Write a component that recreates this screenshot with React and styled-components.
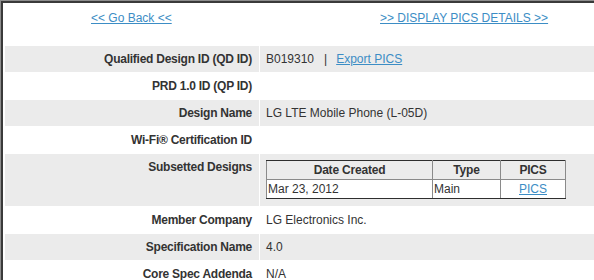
import React from "react";
import styled, { createGlobalStyle } from "styled-components";

const Global = createGlobalStyle`
  html, body { margin: 0; padding: 0; background: #fff; overflow: hidden; }
  body { font-family: "Liberation Sans", Arial, sans-serif; font-size: 12px; color: #333; }
`;

const Frame = styled.div`
  width: 594px;
  height: 280px;
  box-sizing: border-box;
  border-top: 1px solid #8e8e8e;
  border-left: 1px solid #8e8e8e;
  overflow: hidden;
`;

const Inner = styled.div`
  height: 100%;
  box-sizing: border-box;
  border-top: 2px solid #3a3a3a;
  border-left: 2px solid #3a3a3a;
  padding-left: 2px;
  width: 700px;
`;

const LinkBar = styled.div`
  display: flex;
  height: 43px;
  box-sizing: border-box;
  padding: 8px 0 0 86px;
  line-height: 14px;
`;

const LinkSlot = styled.div`
  width: ${(p) => p.$w || "auto"};
`;

const Link = styled.a`
  color: #3c8dc5;
  text-decoration: underline;
  cursor: pointer;
`;

const Rows = styled.div`
  display: flex;
  flex-direction: column;
  gap: 1px;
`;

const Row = styled.div`
  display: grid;
  grid-template-columns: 254px 1fr;
  column-gap: 1px;
  min-height: 26px;
`;

const Label = styled.div`
  background: ${(p) => (p.$shade ? "#ebebeb" : "#fff")};
  text-align: right;
  font-weight: bold;
  letter-spacing: -0.25px;
  padding: 6px 7px 6px 0;
  line-height: 14px;
  color: #333;
`;

const Value = styled.div`
  background: ${(p) => (p.$shade ? "#ebebeb" : "#fff")};
  padding: 6px 0 6px 6px;
  line-height: 14px;
  color: #333;
`;

const Sep = styled.span`
  margin: 0 9px 0 10px;
`;

const SubTable = styled.table`
  border-collapse: collapse;
  border: 1px solid #2e2e2e;
  width: 300px;
  margin-bottom: 1px;
  line-height: 14px;
  font-size: 12px;
`;

const Th = styled.th`
  background: #ececec;
  font-weight: bold;
  text-align: center;
  color: #333;
  border: 1px solid #8a8a8a;
  border-top-color: #2e2e2e;
  padding: 2px 1px 2px;
  width: ${(p) => p.$w};
  letter-spacing: -0.2px;
`;

const Td = styled.td`
  background: #fff;
  border: 1px solid #8a8a8a;
  border-bottom-color: #2e2e2e;
  text-align: ${(p) => p.$align || "left"};
  padding: 2px 1px 2px;
  color: #333;
`;

const rows = [
  ["Qualified Design ID (QD ID)", "qdid"],
  ["PRD 1.0 ID (QP ID)", ""],
  ["Design Name", "LG LTE Mobile Phone (L-05D)"],
  ["Wi-Fi® Certification ID", ""],
  ["Subsetted Designs", "subset"],
  ["Member Company", "LG Electronics Inc."],
  ["Specification Name", "4.0"],
  ["Core Spec Addenda", "N/A"],
];

function renderValue(v) {
  if (v === "qdid") {
    return (
      <>
        B019310<Sep>|</Sep>
        <Link>Export PICS</Link>
      </>
    );
  }
  if (v === "subset") {
    return (
      <SubTable>
        <thead>
          <tr>
            <Th $w="163px">Date Created</Th>
            <Th $w="65px">Type</Th>
            <Th>PICS</Th>
          </tr>
        </thead>
        <tbody>
          <tr>
            <Td>Mar 23, 2012</Td>
            <Td>Main</Td>
            <Td $align="center">
              <Link>PICS</Link>
            </Td>
          </tr>
        </tbody>
      </SubTable>
    );
  }
  return v;
}

export default function App() {
  return (
    <>
      <Global />
      <Frame>
        <Inner>
          <LinkBar>
            <LinkSlot $w="289px">
              <Link>&lt;&lt; Go Back &lt;&lt;</Link>
            </LinkSlot>
            <LinkSlot>
              <Link>&gt;&gt; DISPLAY PICS DETAILS &gt;&gt;</Link>
            </LinkSlot>
          </LinkBar>
          <Rows>
            {rows.map(([label, value], i) => (
              <Row key={label}>
                <Label $shade={i % 2 === 0}>{label}</Label>
                <Value $shade={i % 2 === 0}>{renderValue(value)}</Value>
              </Row>
            ))}
          </Rows>
        </Inner>
      </Frame>
    </>
  );
}
